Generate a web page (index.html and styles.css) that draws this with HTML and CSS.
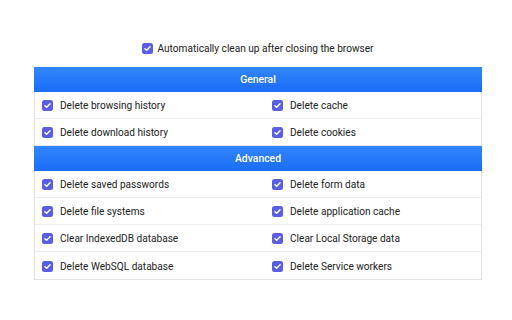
FILE: index.html
```html
<!DOCTYPE html>
<html>
<head>
<meta charset="utf-8">
<link rel="stylesheet" href="styles.css">
</head>
<body>
<div class="page">
  <label class="auto">
    <span class="cb"><svg viewBox="0 0 12 12"><path d="M3.2 6.2 L5.1 8 L8.8 4.2" /></svg></span>
    <span>Automatically clean up after closing the browser</span>
  </label>
  <div class="table">
    <div class="head">General</div>
    <div class="row">
      <div class="cell"><span class="cb"><svg viewBox="0 0 12 12"><path d="M3.2 6.2 L5.1 8 L8.8 4.2" /></svg></span>Delete browsing history</div>
      <div class="cell"><span class="cb"><svg viewBox="0 0 12 12"><path d="M3.2 6.2 L5.1 8 L8.8 4.2" /></svg></span>Delete cache</div>
    </div>
    <div class="row">
      <div class="cell"><span class="cb"><svg viewBox="0 0 12 12"><path d="M3.2 6.2 L5.1 8 L8.8 4.2" /></svg></span>Delete download history</div>
      <div class="cell"><span class="cb"><svg viewBox="0 0 12 12"><path d="M3.2 6.2 L5.1 8 L8.8 4.2" /></svg></span>Delete cookies</div>
    </div>
    <div class="head">Advanced</div>
    <div class="row">
      <div class="cell"><span class="cb"><svg viewBox="0 0 12 12"><path d="M3.2 6.2 L5.1 8 L8.8 4.2" /></svg></span>Delete saved passwords</div>
      <div class="cell"><span class="cb"><svg viewBox="0 0 12 12"><path d="M3.2 6.2 L5.1 8 L8.8 4.2" /></svg></span>Delete form data</div>
    </div>
    <div class="row">
      <div class="cell"><span class="cb"><svg viewBox="0 0 12 12"><path d="M3.2 6.2 L5.1 8 L8.8 4.2" /></svg></span>Delete file systems</div>
      <div class="cell"><span class="cb"><svg viewBox="0 0 12 12"><path d="M3.2 6.2 L5.1 8 L8.8 4.2" /></svg></span>Delete application cache</div>
    </div>
    <div class="row">
      <div class="cell"><span class="cb"><svg viewBox="0 0 12 12"><path d="M3.2 6.2 L5.1 8 L8.8 4.2" /></svg></span>Clear IndexedDB database</div>
      <div class="cell"><span class="cb"><svg viewBox="0 0 12 12"><path d="M3.2 6.2 L5.1 8 L8.8 4.2" /></svg></span>Clear Local Storage data</div>
    </div>
    <div class="row last">
      <div class="cell"><span class="cb"><svg viewBox="0 0 12 12"><path d="M3.2 6.2 L5.1 8 L8.8 4.2" /></svg></span>Delete WebSQL database</div>
      <div class="cell"><span class="cb"><svg viewBox="0 0 12 12"><path d="M3.2 6.2 L5.1 8 L8.8 4.2" /></svg></span>Delete Service workers</div>
    </div>
  </div>
</div>
</body>
</html>
```
FILE: styles.css
```css
html, body {
  margin: 0;
  padding: 0;
  background: #ffffff;
}
body {
  font-family: Roboto, "Liberation Sans", Arial, sans-serif;
  font-size: 10.1px;
  color: #222222;
}
.page {
  width: 448px;
  margin-left: 34px;
  padding-top: 42px;
}
.auto {
  display: flex;
  align-items: center;
  justify-content: center;
  gap: 4px;
  height: 13px;
  margin-bottom: 12px;
}
.cb {
  width: 11px;
  height: 11px;
  border-radius: 2.5px;
  background: #5a5de8;
  display: inline-flex;
  flex: none;
}
.cb svg {
  width: 11px;
  height: 11px;
}
.cb path {
  fill: none;
  stroke: #ffffff;
  stroke-width: 1.6;
  stroke-linecap: round;
  stroke-linejoin: round;
}
.table {
  border: 1px solid #e2e2e2;
  border-top: none;
}
.head {
  height: 25px;
  margin: 0 -1px;
  background: linear-gradient(#3286fb, #1a6df6);
  color: #ffffff;
  display: flex;
  align-items: center;
  justify-content: center;
  font-weight: 500;
  font-size: 10.4px;
}
.row {
  display: grid;
  grid-template-columns: 230px 1fr;
  height: 27px;
  box-sizing: border-box;
  border-bottom: 1px solid #ececec;
}
.row.last {
  border-bottom: none;
}
.cell {
  display: flex;
  align-items: center;
  gap: 7px;
  padding-left: 7px;
  padding-top: 1px;
}
```
